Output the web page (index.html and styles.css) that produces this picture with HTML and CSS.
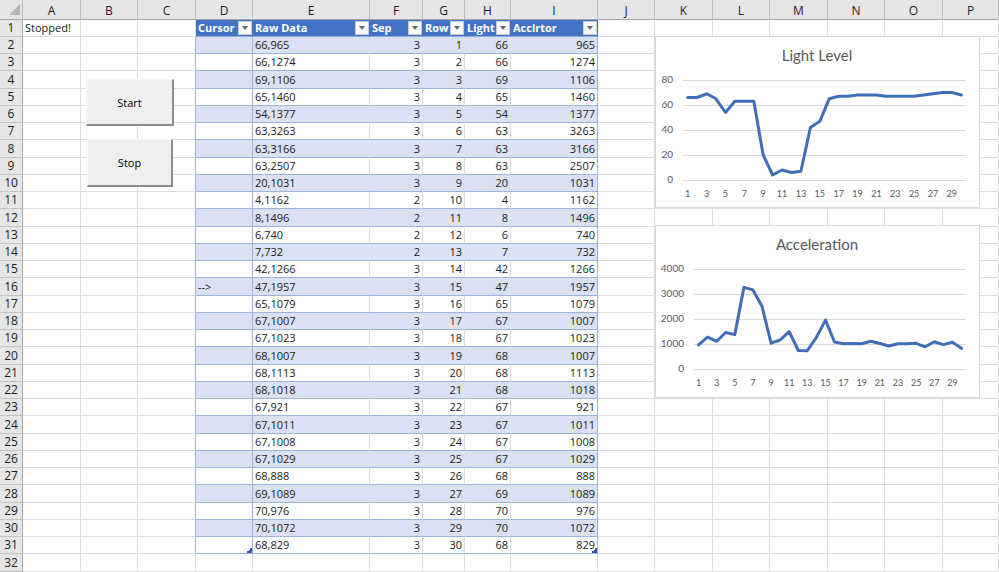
FILE: index.html
```html
<!DOCTYPE html>
<html lang="en">
  <head>
    <meta charset="UTF-8" />
    <meta name="viewport" content="width=device-width, initial-scale=1" />
    <title>Data Log</title>
    <link rel="stylesheet" href="styles.css">
  </head>
  <body>
    <main class="sheet">
      <table class="grid">
        <colgroup>
          <col class="w-index" />
          <col class="w-58" />
          <col class="w-57" />
          <col class="w-58" />
          <col class="w-57" />
          <col class="w-raw" />
          <col class="w-sep" />
          <col class="w-row" />
          <col class="w-light" />
          <col class="w-accel" />
          <col class="w-57" />
          <col class="w-58" />
          <col class="w-57" />
          <col class="w-58" />
          <col class="w-57" />
          <col class="w-58" />
          <col />
        </colgroup>
        <thead>
          <tr id="letters"></tr>
        </thead>
        <tbody id="rows"></tbody>
      </table>

      <button type="button" class="macro start" id="startBtn">Start</button>
      <button type="button" class="macro stop" id="stopBtn">Stop</button>

      <svg class="chart light-chart" id="lightChart" width="325" height="172" role="img" aria-label="Light Level"></svg>
      <svg class="chart accel-chart" id="accelChart" width="325" height="173" role="img" aria-label="Acceleration"></svg>
    </main>
    <script src="script.js"></script>
  </body>
</html>
```
FILE: styles.css
```css
body {
  margin: 0;
  height: 100vh;
  overflow: hidden;
  background-color: white;
  font-family: "Open Sans", sans-serif;
  font-size: 11px;
  color: #1c1c1c;
}

.sheet {
  position: relative;
}

.grid {
  width: 100%;
  table-layout: fixed;
  border-collapse: separate;
  border-spacing: 0;
}

.w-index { width: 23px; }
.w-57 { width: 57px; }
.w-58 { width: 58px; }
.w-raw { width: 117px; }
.w-sep { width: 53px; }
.w-row { width: 42px; }
.w-light { width: 46px; }
.w-accel { width: 87px; }

.grid th,
.grid td {
  box-sizing: border-box;
  height: 17px;
  padding: 0 2px;
  line-height: 16px;
  border-right: 1px solid #dcdcdc;
  border-bottom: 1px solid #dcdcdc;
  white-space: nowrap;
  text-align: left;
}

/* row height averages 17.25px */
.grid tbody tr:nth-child(4n) > * {
  height: 18px;
  line-height: 17px;
}

.grid thead th {
  height: 20px;
  padding: 2px 0 0;
  background-color: #e6e6e6;
  border-right-color: #bdbdbd;
  border-bottom-color: #a6a6a6;
  font-size: 12px;
  font-weight: normal;
  text-align: center;
}

.grid .index {
  padding: 0;
  background-color: #e6e6e6;
  border-right-color: #a6a6a6;
  border-bottom-color: #c4c4c4;
  font-size: 12px;
  font-weight: normal;
  text-align: center;
}

.grid thead .corner {
  padding: 0 0 0 7px;
}

.corner svg {
  display: block;
}

/* data table */
.grid .title {
  padding: 0 0 0 2px;
  background-color: #4472c4;
  border-right-color: #4472c4;
  border-bottom-color: #8ea9db;
  color: white;
  font-weight: bold;
}

.title-inner {
  display: flex;
  justify-content: space-between;
  align-items: center;
  height: 16px;
}

.filter {
  display: flex;
  flex: none;
  justify-content: center;
  align-items: center;
  width: 14px;
  height: 14px;
  padding: 0;
  border: 1px solid #c6cbd4;
  background-color: #fafafa;
}

.grid .data {
  position: relative;
  border-bottom-color: #9db4df;
}

.grid .band {
  background-color: #d9e1f2;
  border-right-color: #d9e1f2;
}

.grid .num {
  text-align: right;
}

.grid .edge {
  border-right-color: #9db4df;
}

.handle {
  position: absolute;
  right: 0;
  bottom: 0;
}

/* form buttons placed on the sheet */
.macro {
  position: absolute;
  left: 86px;
  width: 88px;
  height: 47px;
  padding: 0;
  border: 1px solid #f8f8f8;
  border-right: 2px solid #8c8c8c;
  border-bottom: 2px solid #8c8c8c;
  background-color: #efefef;
  font-family: "Open Sans", sans-serif;
  font-size: 11px;
  color: black;
}

.start {
  top: 79px;
}

.stop {
  top: 139px;
  left: 87px;
  width: 86px;
  height: 48px;
}

/* charts */
.chart {
  position: absolute;
  left: 655px;
  background-color: white;
  outline: 1px solid #d9d9d9;
  outline-offset: -1px;
  font-family: Lato, "Open Sans", sans-serif;
}

.light-chart {
  top: 36px;
}

.accel-chart {
  top: 225px;
}

.chart-title {
  font-size: 15px;
  fill: #595959;
  text-anchor: middle;
}

.axis {
  font-size: 10px;
  fill: #595959;
  text-anchor: end;
}

.tick {
  font-size: 9px;
  fill: #595959;
  text-anchor: middle;
}

.gridline {
  stroke: #d9d9d9;
  shape-rendering: crispEdges;
}

.series {
  fill: none;
  stroke: #426db8;
  stroke-width: 3;
  stroke-linejoin: round;
  stroke-linecap: round;
}
```
FILE: script.js
```js
const light = [66, 66, 69, 65, 54, 63, 63, 63, 20, 4, 8, 6, 7, 42, 47, 65, 67, 67, 68, 68, 68, 67, 67, 67, 67, 68, 69, 70, 70, 68];
const accel = [965, 1274, 1106, 1460, 1377, 3263, 3166, 2507, 1031, 1162, 1496, 740, 732, 1266, 1957, 1079, 1007, 1023, 1007, 1113, 1018, 921, 1011, 1008, 1029, 888, 1089, 976, 1072, 829];
const titles = ["Cursor", "Raw Data", "Sep", "Row", "Light", "Acclrtor"];
const cursorRow = 15;

const handle = `<svg class="handle" width="5" height="5"><path d="M5 0V5H0V3H2V2H3V0Z" fill="#3f51a5"/></svg>`;
const arrow = `<svg width="6" height="4"><path d="M0 0H6L3 4Z" fill="#666"/></svg>`;

// column letters
let head = `<th class="corner"><svg width="14" height="12"><path d="M13 0V11H2Z" fill="#b5b5b5"/></svg></th>`;
for (const letter of "ABCDEFGHIJKLMNOP") {
  head += `<th scope="col">${letter}</th>`;
}
document.getElementById("letters").innerHTML = head;

function emptyCells(count) {
  return "<td></td>".repeat(count);
}

// row 1 holds the status text and the table titles
let html = `<tr><th class="index" scope="row">1</th><td>Stopped!</td>${emptyCells(2)}`;
titles.forEach((title) => {
  html += `<th class="title" scope="col"><div class="title-inner">${title}<button type="button" class="filter" aria-label="Filter ${title}">${arrow}</button></div></th>`;
});
html += `${emptyCells(7)}</tr>`;

light.forEach((value, i) => {
  const raw = `${value},${accel[i]}`;
  const band = i % 2 == 0 ? "band" : "";
  const last = i == light.length - 1 ? handle : "";
  html += `<tr>
    <th class="index" scope="row">${i + 2}</th>
    ${emptyCells(2)}<td class="edge"></td>
    <td class="data ${band} edge">${i + 1 == cursorRow ? "--&gt;" : ""}${last}</td>
    <td class="data ${band}">${raw}</td>
    <td class="data ${band} num">${raw.indexOf(",") + 1}</td>
    <td class="data ${band} num">${i + 1}</td>
    <td class="data ${band} num">${value}</td>
    <td class="data ${band} num edge">${accel[i]}${last}</td>
    ${emptyCells(7)}
  </tr>`;
});

html += `<tr><th class="index" scope="row">32</th>${emptyCells(16)}</tr>`;
html += `<tr><th class="index"></th>${emptyCells(16)}</tr>`;
document.getElementById("rows").innerHTML = html;

function drawChart(id, title, data, max, left) {
  const right = 311;
  const top = 44;
  const height = 100;
  const step = (right - left) / data.length;
  let svg = `<text class="chart-title" x="162" y="25">${title}</text>`;

  for (let i = 0; i <= 4; i++) {
    const y = top + (height / 4) * i;
    svg += `<line class="gridline" x1="${left}" x2="${right}" y1="${y}" y2="${y}"/>`;
    svg += `<text class="axis" x="${left - 10}" y="${y + 3}">${max - (max / 4) * i}</text>`;
  }

  const points = data.map((value, i) => {
    const x = left + step * (i + 0.5);
    if (i % 2 == 0) {
      svg += `<text class="tick" x="${x}" y="161">${i + 1}</text>`;
    }
    return `${x.toFixed(1)},${(top + height - (value / max) * height).toFixed(1)}`;
  });
  svg += `<polyline class="series" points="${points.join(" ")}"/>`;
  document.getElementById(id).innerHTML = svg;
}

drawChart("lightChart", "Light Level", light, 80, 28);
drawChart("accelChart", "Acceleration", accel, 4000, 39);
```
